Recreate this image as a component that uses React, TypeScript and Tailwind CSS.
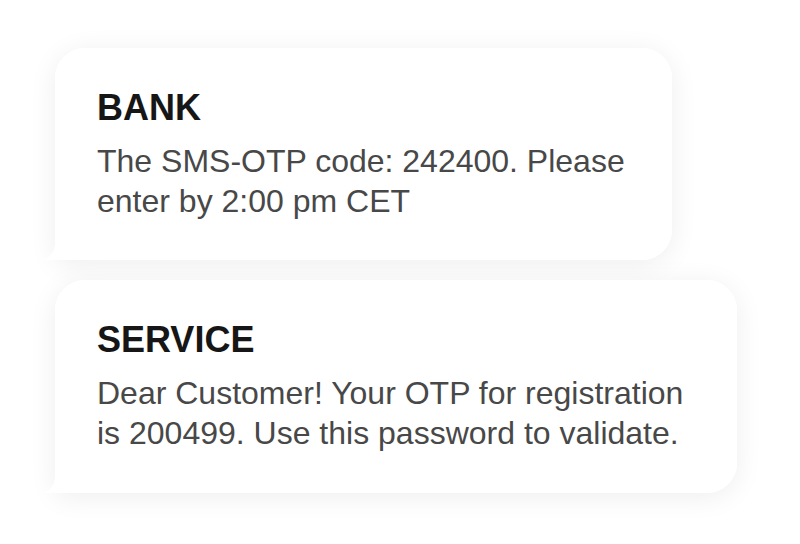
import React from "react";

function Tail() {
  return (
    <svg
      className="absolute left-[-12px] bottom-0"
      width="30"
      height="34"
      viewBox="0 0 30 34"
    >
      <path d="M12 0 L12 16 C12 26 8 30 0 34 L30 34 L30 0 Z" fill="#ffffff" />
    </svg>
  );
}

function Bubble({
  title,
  lines,
  className,
}: {
  title: string;
  lines: string[];
  className: string;
}) {
  return (
    <div className={"relative " + className}>
      <div className="absolute inset-0 rounded-[30px] rounded-bl-[6px] shadow-[0_4px_28px_rgba(0,0,0,0.07)]" />
      <Tail />
      <div className="relative rounded-[30px] rounded-bl-[6px] bg-white h-full pl-[42px] pt-[40px]">
        <div className="text-[36px] leading-[40px] font-bold text-[#161616]">
          {title}
        </div>
        <div className="mt-[13px] text-[32px] leading-[40px] text-[#484848]">
          {lines.map((l) => (
            <div key={l} className="whitespace-nowrap">
              {l}
            </div>
          ))}
        </div>
      </div>
    </div>
  );
}

export default function App() {
  return (
    <div
      className="w-[800px] h-[544px] bg-white pl-[55px] pt-[48px] flex flex-col gap-[20px]"
      style={{ fontFamily: "'Liberation Sans', Arial, sans-serif" }}
    >
      <Bubble
        className="w-[617px] h-[212px]"
        title="BANK"
        lines={["The SMS-OTP code: 242400. Please", "enter by 2:00 pm CET"]}
      />
      <Bubble
        className="w-[682px] h-[213px]"
        title="SERVICE"
        lines={[
          "Dear Customer! Your OTP for registration",
          "is 200499. Use this password to validate.",
        ]}
      />
    </div>
  );
}
